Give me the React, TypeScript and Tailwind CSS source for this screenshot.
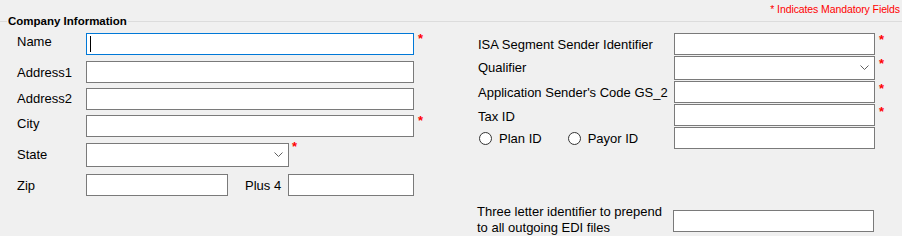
import React from "react";

const Star = ({ className = "" }: { className?: string }) => (
  <span className={`text-[13px] font-bold leading-none text-[#ff0000] ${className}`}>*</span>
);

const Chevron = () => (
  <svg width="9" height="6" viewBox="0 0 9 6" className="shrink-0">
    <path d="M0.5 0.5 L4.5 4.5 L8.5 0.5" fill="none" stroke="#606060" strokeWidth="1" />
  </svg>
);

const TextBox = ({ w, h = "h-[22px]", focused = false }: { w: string; h?: string; focused?: boolean }) => (
  <div
    className={`${w} ${h} shrink-0 bg-white border ${focused ? "border-[#0078d7]" : "border-[#7a7a7a]"} flex items-center`}
  >
    {focused && <span className="ml-[3px] block h-[16px] w-px bg-black" />}
  </div>
);

const Select = ({ w }: { w: string }) => (
  <div className={`${w} h-[24px] shrink-0 bg-white border border-[#7a7a7a] flex items-center justify-end pr-[5px]`}>
    <Chevron />
  </div>
);

const Radio = ({ label }: { label: string }) => (
  <div className="flex items-center gap-[7px]">
    <span className="block h-[13px] w-[13px] rounded-full border border-[#333] bg-white" />
    <span>{label}</span>
  </div>
);

export default function App() {
  return (
    <div
      className="w-[902px] h-[236px] bg-[#f0f0f0] overflow-hidden text-[13px] leading-[15px] text-black"
      style={{ fontFamily: '"Liberation Sans", Arial, sans-serif' }}
    >
      {/* mandatory note */}
      <div className="h-[14px] flex justify-end pr-[2px] pt-[3px]">
        <span className="text-[10.5px] leading-[12px] text-[#ff0000] tracking-[-0.1px]">* Indicates Mandatory Fields</span>
      </div>

      {/* group header */}
      <div className="h-[14px] flex items-center">
        <div className="w-[7px] h-px bg-[#dcdcdc]" />
        <span className="px-[1px] text-[11.5px] font-bold leading-[14px]">Company Information</span>
        <div className="flex-1 h-px bg-[#dcdcdc] mt-px" />
      </div>

      <div className="flex">
        {/* left column */}
        <div className="w-[478px] pl-[17px]">
          <div className="mt-[5px] flex items-start">
            <div className="w-[69px] h-[22px] flex items-center pb-[5px]">Name</div>
            <TextBox w="w-[328px]" focused />
            <Star className="ml-[4px] -mt-[1px]" />
          </div>
          <div className="mt-[6px] flex items-start">
            <div className="w-[69px] h-[22px] flex items-center">Address1</div>
            <TextBox w="w-[328px]" />
          </div>
          <div className="mt-[5px] flex items-start">
            <div className="w-[69px] h-[22px] flex items-center pb-[1px]">Address2</div>
            <TextBox w="w-[328px]" />
          </div>
          <div className="mt-[5px] flex items-start">
            <div className="w-[69px] h-[22px] flex items-center pb-[5px]">City</div>
            <TextBox w="w-[328px]" />
            <Star className="ml-[4px] -mt-[1px]" />
          </div>
          <div className="mt-[6px] flex items-start">
            <div className="w-[69px] h-[24px] flex items-center pb-[1px]">State</div>
            <Select w="w-[203px]" />
            <Star className="ml-[3px] -mt-[3px]" />
          </div>
          <div className="mt-[7px] flex items-start">
            <div className="w-[69px] h-[22px] flex items-center">Zip</div>
            <TextBox w="w-[142px]" />
            <div className="w-[60px] h-[22px] flex items-center pl-[17px]">Plus 4</div>
            <TextBox w="w-[126px]" />
          </div>
        </div>

        {/* right column */}
        <div className="flex-1">
          <div className="mt-[5px] flex items-start">
            <div className="w-[196px] h-[22px] flex items-center">ISA Segment Sender Identifier</div>
            <TextBox w="w-[201px]" />
            <Star className="ml-[4px]" />
          </div>
          <div className="mt-[1px] flex items-start">
            <div className="w-[196px] h-[24px] flex items-center pb-[2px]">Qualifier</div>
            <Select w="w-[201px]" />
            <Star className="ml-[4px] mt-px" />
          </div>
          <div className="mt-[1px] flex items-start">
            <div className="w-[196px] h-[22px] flex items-center">Application Sender's Code GS_2</div>
            <TextBox w="w-[201px]" />
            <Star className="ml-[4px] mt-px" />
          </div>
          <div className="mt-[1px] flex items-start">
            <div className="w-[196px] h-[22px] flex items-center pt-[2px]">Tax ID</div>
            <TextBox w="w-[201px]" />
            <Star className="ml-[4px] mt-px" />
          </div>
          <div className="mt-[1px] flex items-start">
            <div className="w-[196px] h-[22px] flex items-center gap-[26px] pl-[1px] pt-[1px]">
              <Radio label="Plan ID" />
              <Radio label="Payor ID" />
            </div>
            <TextBox w="w-[201px]" />
          </div>
          <div className="mt-[61px] flex items-start">
            <div className="w-[196px] h-[22px] flex flex-col justify-center leading-[16px] -ml-px pb-[3px]">
              <span>Three letter identifier to prepend</span>
              <span>to all outgoing EDI files</span>
            </div>
            <TextBox w="w-[201px]" />
          </div>
        </div>
      </div>
    </div>
  );
}
